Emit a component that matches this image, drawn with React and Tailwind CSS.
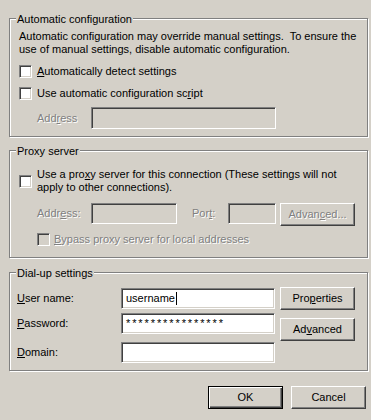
const sunken =
  'border border-t-[#808080] border-l-[#808080] border-r-white border-b-white shadow-[inset_1px_1px_0_#404040,inset_-1px_-1px_0_#d4d0c8]'
const raised =
  'border border-t-white border-l-white border-r-[#404040] border-b-[#404040] shadow-[inset_-1px_-1px_0_#808080]'
const dim = 'text-[#808080] [text-shadow:1px_1px_0_#fff]'

function Key({ children }) {
  return <span className="underline underline-offset-[1px]">{children}</span>
}

function Check({ disabled }) {
  return (
    <span className={`block h-[13px] w-[13px] shrink-0 ${sunken} ${disabled ? 'bg-[#d4d0c8]' : 'bg-white'}`} />
  )
}

function Field({ className = '', disabled, children }) {
  return (
    <div
      className={`flex h-[21px] items-center pl-[4px] ${sunken} ${disabled ? 'bg-[#d4d0c8]' : 'bg-white'} ${className}`}
    >
      {children}
    </div>
  )
}

function Btn({ children, disabled, primary, className = '' }) {
  const frame = primary
    ? 'border border-black shadow-[inset_1px_1px_0_#fff,inset_-1px_-1px_0_#404040,inset_-2px_-2px_0_#808080]'
    : raised
  return (
    <div
      className={`flex h-[23px] w-[75px] shrink-0 items-center justify-center bg-[#d4d0c8] ${frame} ${disabled ? dim : 'text-black'} ${className}`}
    >
      {children}
    </div>
  )
}

function Group({ title, className = '', children }) {
  return (
    <div
      className={`relative w-[359px] border border-[#808080] shadow-[inset_1px_1px_0_#fff,1px_1px_0_#fff] ${className}`}
    >
      <span className="absolute left-[6px] top-[-6px] bg-[#d4d0c8] px-[1px] leading-[13px]">{title}</span>
      {children}
    </div>
  )
}

export default function App() {
  return (
    <div className="h-[420px] w-[371px] bg-[#d4d0c8] pl-[9px] pt-[18px] font-['Liberation_Sans',Arial,sans-serif] text-[11px] leading-[13px] text-black">
      <Group title="Automatic configuration" className="h-[119px]">
        <p className="pl-[9px] pt-[11px]">
          Automatic configuration may override manual settings.&nbsp; To ensure the
          <br />
          use of manual settings, disable automatic configuration.
        </p>
        <div className="ml-[9px] mt-[9px] flex h-[13px] items-center gap-[5px]">
          <Check />
          <span>
            <Key>A</Key>utomatically detect settings
          </span>
        </div>
        <div className="ml-[9px] mt-[9px] flex h-[13px] items-center gap-[5px]">
          <Check />
          <span>
            Use automatic configuration sc<Key>r</Key>ipt
          </span>
        </div>
        <div className="ml-[27px] mt-[7px] flex items-center">
          <span className={`w-[54px] ${dim}`}>
            Add<Key>r</Key>ess
          </span>
          <Field disabled className="h-[22px] w-[185px]" />
        </div>
      </Group>

      <Group title="Proxy server" className="mt-[13px] h-[108px]">
        <div className="ml-[9px] flex items-center gap-[5px] pt-[17px]">
          <Check />
          <span>
            Use a pro<Key>x</Key>y server for this connection (These settings will not
            <br />
            apply to other connections).
          </span>
        </div>
        <div className="ml-[27px] mt-[9px] flex items-start">
          <span className={`w-[54px] leading-[21px] ${dim}`}>
            Addr<Key>e</Key>ss:
          </span>
          <Field disabled className="w-[86px]" />
          <span className={`ml-[15px] w-[36px] leading-[21px] ${dim}`}>
            Por<Key>t</Key>:
          </span>
          <Field disabled className="w-[48px]" />
          <Btn disabled className="ml-[4px]">
            <span>
              Advan<Key>c</Key>ed...
            </span>
          </Btn>
        </div>
        <div className="ml-[27px] mt-[7px] flex h-[13px] items-center gap-[4px]">
          <Check disabled />
          <span className={dim}>
            <Key>B</Key>ypass proxy server for local addresses
          </span>
        </div>
      </Group>

      <Group title="Dial-up settings" className="mt-[14px] h-[99px]">
        <div className="flex">
          <div className="flex flex-col pl-[7px] pt-[15px]">
            <div className="flex items-center">
              <span className="w-[104px]">
                <Key>U</Key>ser name:
              </span>
              <Field className="w-[154px]">
                <span>username</span>
                <span className="ml-[1px] h-[13px] w-px bg-black" />
              </Field>
            </div>
            <div className="mt-[4px] flex items-center">
              <span className="w-[104px]">
                <Key>P</Key>assword:
              </span>
              <Field className="w-[154px]">
                <span className="tracking-[1.9px]">****************</span>
              </Field>
            </div>
            <div className="mt-[8px] flex items-center">
              <span className="w-[104px]">
                <Key>D</Key>omain:
              </span>
              <Field className="w-[154px]" />
            </div>
          </div>
          <div className="ml-[5px] flex flex-col gap-[8px] pt-[14px]">
            <Btn>
              <span>
                Pro<Key>p</Key>erties
              </span>
            </Btn>
            <Btn>
              <span>
                Ad<Key>v</Key>anced
              </span>
            </Btn>
          </div>
        </div>
      </Group>

      <div className="mt-[15px] flex justify-end gap-[8px] pr-[5px]">
        <Btn primary>OK</Btn>
        <Btn>Cancel</Btn>
      </div>
    </div>
  )
}
